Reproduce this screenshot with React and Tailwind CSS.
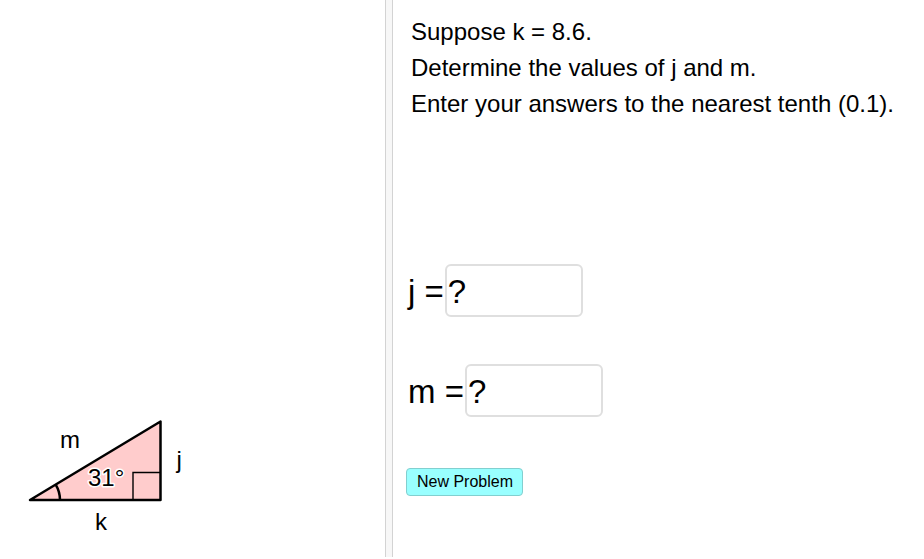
const INSTRUCTIONS = [
  'Suppose k = 8.6.',
  'Determine the values of j and m.',
  'Enter your answers to the nearest tenth (0.1).',
];

function Triangle() {
  return (
    <svg
      className="block h-[159px] w-[200px] text-[24px]"
      viewBox="0 400 200 159"
      role="img"
    >
      <path d="M30 500 L160.5 421.5 V500 Z" fill="#ffcccc" stroke="#000" strokeWidth="2.5" strokeLinejoin="round" />
      <path d="M60 500 A30 30 0 0 0 55.7 484.6" fill="none" stroke="#000" strokeWidth="2.5" />
      <path d="M133 499 V472.5 H160" fill="none" stroke="#000" strokeWidth="1.4" />
      <text x="60" y="448">m</text>
      <text x="176.5" y="468">j</text>
      <text x="95" y="530">k</text>
      <text x="88" y="486" stroke="#fff" strokeWidth="3" strokeLinejoin="round" paintOrder="stroke">31°</text>
    </svg>
  );
}

function AnswerField({ name }) {
  return (
    <label className="flex h-[53px] items-center text-[33px] leading-[52px]">
      <span className="whitespace-pre pt-[3px]">{name} =</span>
      <input
        className="ml-px h-[53px] w-[138px] rounded-[6px] border-2 border-[#dfdfdf] bg-white pb-0 pl-px pt-[3px] outline-none"
        defaultValue="?"
      />
    </label>
  );
}

export default function App() {
  return (
    <main className="flex h-[559px] w-[924px] flex-col overflow-hidden bg-white font-['Liberation_Sans',Arial,sans-serif] text-black">
      <div className="flex h-[557px]">
        <section className="flex w-[385px] flex-col justify-end">
          <div className="h-[157px]">
            <Triangle />
          </div>
        </section>
        <div className="w-2 border-x border-[#d3d3d3] bg-[#f7f7f7]" />
        <section className="flex flex-1 flex-col items-start pl-[15px] pt-[14px]">
          <div className="whitespace-nowrap pl-[3px] text-[24px] leading-[36px]">
            {INSTRUCTIONS.map((line) => (
              <p key={line}>{line}</p>
            ))}
          </div>
          <div className="mt-[142px] flex flex-col gap-[47px]">
            <AnswerField name="j" />
            <AnswerField name="m" />
          </div>
          <button className="-ml-[2px] mt-[51px] h-[28px] w-[117px] rounded-[4px] border-[1.5px] border-[#82cfcf] bg-[#99ffff] pl-px text-[16px] leading-[24px]">
            New Problem
          </button>
        </section>
      </div>
    </main>
  );
}
